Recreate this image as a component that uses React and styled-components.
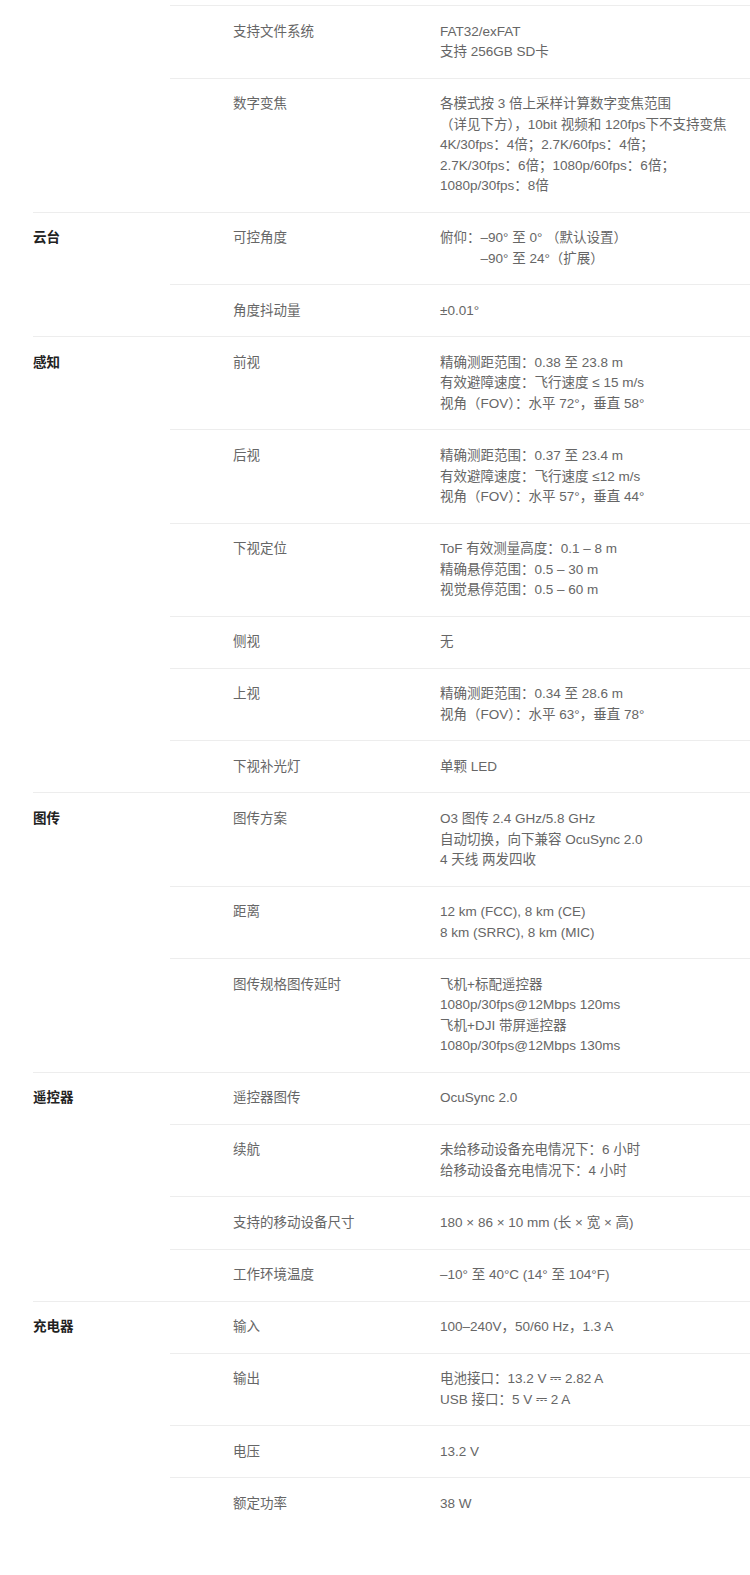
import React from "react";
import styled, { createGlobalStyle } from "styled-components";

const Global = createGlobalStyle`
  html, body { margin: 0; padding: 0; background: #fff; }
  body {
    font-family: "Liberation Sans", "Noto Sans CJK SC", sans-serif;
    -webkit-font-smoothing: antialiased;
  }
`;

const Page = styled.div`
  width: 750px;
  box-sizing: border-box;
  padding: 5px 0 45px 33px;
  font-size: 13.5px;
  line-height: 20.5px;
`;

const Group = styled.section`
  display: grid;
  grid-template-columns: 137px 1fr;
  border-top: ${(p) => (p.$noBorder ? "none" : "1px solid #ededed")};
`;

const Category = styled.div`
  padding-top: 15.6px;
  color: #222;
  font-weight: 700;
`;

const Rows = styled.div`
  display: flex;
  flex-direction: column;
`;

const Row = styled.div`
  display: grid;
  grid-template-columns: 207px 1fr;
  padding: 15.6px 0 15px 63px;
  border-top: ${(p) => (p.$border ? "1px solid #ededed" : "none")};
`;

const Label = styled.div`
  color: #666;
`;

const Value = styled.div`
  color: #666;
`;

const Line = styled.div`
  padding-left: ${(p) => (p.$indent ? "3em" : "0")};
  white-space: nowrap;
`;

const data = [
  {
    cat: "",
    partial: true,
    rows: [
      ["支持文件系统", ["FAT32/exFAT", "支持 256GB SD卡"]],
      [
        "数字变焦",
        [
          "各模式按 3 倍上采样计算数字变焦范围",
          "（详见下方），10bit 视频和 120fps下不支持变焦",
          "4K/30fps：4倍；2.7K/60fps：4倍；",
          "2.7K/30fps：6倍；1080p/60fps：6倍；",
          "1080p/30fps：8倍",
        ],
      ],
    ],
  },
  {
    cat: "云台",
    rows: [
      ["可控角度", ["俯仰：–90° 至 0° （默认设置）", { t: "–90° 至 24°（扩展）", indent: true }]],
      ["角度抖动量", ["±0.01°"]],
    ],
  },
  {
    cat: "感知",
    rows: [
      ["前视", ["精确测距范围：0.38 至 23.8 m", "有效避障速度：飞行速度 ≤ 15 m/s", "视角（FOV）：水平 72°，垂直 58°"]],
      ["后视", ["精确测距范围：0.37 至 23.4 m", "有效避障速度：飞行速度 ≤12 m/s", "视角（FOV）：水平 57°，垂直 44°"]],
      ["下视定位", ["ToF 有效测量高度：0.1 – 8 m", "精确悬停范围：0.5 – 30 m", "视觉悬停范围：0.5 – 60 m"]],
      ["侧视", ["无"]],
      ["上视", ["精确测距范围：0.34 至 28.6 m", "视角（FOV）：水平 63°，垂直 78°"]],
      ["下视补光灯", ["单颗 LED"]],
    ],
  },
  {
    cat: "图传",
    rows: [
      ["图传方案", ["O3 图传 2.4 GHz/5.8 GHz", "自动切换，向下兼容 OcuSync 2.0", "4 天线 两发四收"]],
      ["距离", ["12 km (FCC), 8 km (CE)", "8 km (SRRC), 8 km (MIC)"]],
      [
        "图传规格图传延时",
        ["飞机+标配遥控器", "1080p/30fps@12Mbps 120ms", "飞机+DJI 带屏遥控器", "1080p/30fps@12Mbps 130ms"],
      ],
    ],
  },
  {
    cat: "遥控器",
    rows: [
      ["遥控器图传", ["OcuSync 2.0"]],
      ["续航", ["未给移动设备充电情况下：6 小时", "给移动设备充电情况下：4 小时"]],
      ["支持的移动设备尺寸", ["180 × 86 × 10 mm (长 × 宽 × 高)"]],
      ["工作环境温度", ["–10° 至 40°C (14° 至 104°F)"]],
    ],
  },
  {
    cat: "充电器",
    rows: [
      ["输入", ["100–240V，50/60 Hz，1.3 A"]],
      ["输出", ["电池接口：13.2 V ⎓ 2.82 A", "USB 接口：5 V ⎓ 2 A"]],
      ["电压", ["13.2 V"]],
      ["额定功率", ["38 W"]],
    ],
  },
];

export default function App() {
  return (
    <>
      <Global />
      <Page>
        {data.map((g, gi) => (
          <Group key={gi} $noBorder={g.partial}>
            <Category>{g.cat}</Category>
            <Rows>
              {g.rows.map(([label, lines], ri) => (
                <Row key={ri} $border={ri > 0 || g.partial}>
                  <Label>{label}</Label>
                  <Value>
                    {lines.map((l, li) =>
                      typeof l === "string" ? (
                        <Line key={li}>{l}</Line>
                      ) : (
                        <Line key={li} $indent={l.indent}>
                          {l.t}
                        </Line>
                      )
                    )}
                  </Value>
                </Row>
              ))}
            </Rows>
          </Group>
        ))}
      </Page>
    </>
  );
}
